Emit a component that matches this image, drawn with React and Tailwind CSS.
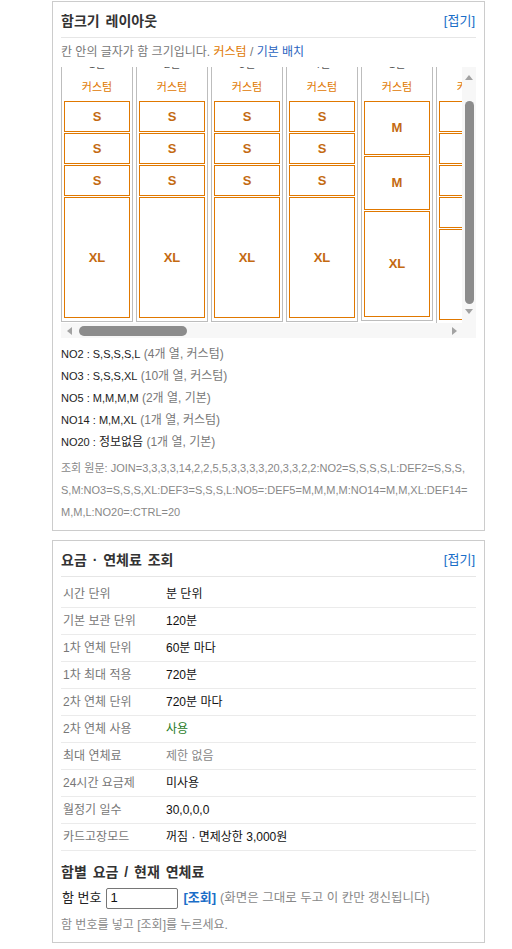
import React from "react";

const S = (label, h) => ({ label, h });

const columns = [
  { top: "1열", cells: [S("S", 31), S("S", 31), S("S", 31), S("XL", 121)] },
  { top: "2열", cells: [S("S", 31), S("S", 31), S("S", 31), S("XL", 121)] },
  { top: "3열", cells: [S("S", 31), S("S", 31), S("S", 31), S("XL", 121)] },
  { top: "4열", cells: [S("S", 31), S("S", 31), S("S", 31), S("XL", 121)] },
  { top: "1열", cells: [S("M", 54), S("M", 54), S("XL", 106)] },
  { top: "1열", cells: [S("S", 31), S("S", 31), S("S", 31), S("S", 31), S("L", 91)] },
  { top: "2열", cells: [S("S", 31), S("S", 31), S("S", 31), S("S", 31), S("L", 91)] },
];

const infoLines = [
  ["NO2 : S,S,S,S,L", "", "(4개 열, 커스텀)"],
  ["NO3 : S,S,S,XL", "", "(10개 열, 커스텀)"],
  ["NO5 : M,M,M,M", "", "(2개 열, 기본)"],
  ["NO14 : M,M,XL", "", "(1개 열, 커스텀)"],
  ["NO20 : ", "정보없음", "(1개 열, 기본)"],
];

const rows = [
  ["시간 단위", "분 단위", "text-[#111]"],
  ["기본 보관 단위", "120분", "text-[#111]"],
  ["1차 연체 단위", "60분 마다", "text-[#111]"],
  ["1차 최대 적용", "720분", "text-[#111]"],
  ["2차 연체 단위", "720분 마다", "text-[#111]"],
  ["2차 연체 사용", "사용", "text-[#1e7b1e]"],
  ["최대 연체료", "제한 없음", "text-[#888]"],
  ["24시간 요금제", "미사용", "text-[#111]"],
  ["월정기 일수", "30,0,0,0", "text-[#111]"],
  ["카드고장모드", "꺼짐 · 면제상한 3,000원", "text-[#111]"],
];

function Tri({ dir }) {
  const pts = {
    up: "0,5 4,0 8,5",
    down: "0,0 8,0 4,5",
    left: "5,0 5,8 0,4",
    right: "0,0 0,8 5,4",
  }[dir];
  const w = dir === "up" || dir === "down" ? 8 : 5;
  const h = dir === "up" || dir === "down" ? 5 : 8;
  return (
    <svg width={w} height={h} viewBox={`0 0 ${w} ${h}`}>
      <polygon points={pts} fill="#a3a3a3" />
    </svg>
  );
}

function Header({ title }) {
  return (
    <div className="box-content flex h-[22px] items-center justify-between border-b border-[#e6e6e6] pb-[5px]">
      <div className="text-[14px] font-bold text-[#333] [word-spacing:2px]">{title}</div>
      <div className="pr-[1px] text-[13px] text-[#1a6ec8]">[접기]</div>
    </div>
  );
}

export default function App() {
  return (
    <div className="bg-white pt-[1px] font-['Liberation_Sans','Noto_Sans_CJK_KR',sans-serif] text-[12px]">
      <div className="ml-[52px] w-[433px] border border-[#cccccc] px-[8px] pt-[8px] pb-[7px]">
        <Header title="함크기 레이아웃" />
        <div className="mt-[5px] h-[18px] leading-[18px] text-[#777]">
          칸 안의 글자가 함 크기입니다. <span className="text-[#e07800]">커스텀</span> /{" "}
          <span className="text-[#2a64c0]">기본 배치</span>
        </div>
        <div className="mt-[6px] flex h-[271px]">
          <div className="flex min-w-0 flex-1 flex-col">
            <div className="min-h-0 flex-1 overflow-hidden">
              <div className="-mt-[13px] flex w-max items-start gap-[3px]">
                {columns.map((c, i) => (
                  <div key={i} className="w-[72px] border border-[#bdbdbd] px-[2px] pt-[2px] pb-[3px]">
                    <div className="h-[14px] text-center text-[11px] leading-[14px] text-[#555]">{c.top}</div>
                    <div className="mt-[7px] h-[18px] text-center text-[11px] leading-[18px] text-[#e07800]">커스텀</div>
                    <div className="mt-[5px] flex flex-col gap-[1px]">
                      {c.cells.map((cell, j) => (
                        <div
                          key={j}
                          className="flex items-center justify-center border border-[#e07800] text-[13px] font-bold text-[#c46a12]"
                          style={{ height: cell.h }}
                        >
                          {cell.label}
                        </div>
                      ))}
                    </div>
                  </div>
                ))}
              </div>
            </div>
            <div className="flex h-[15px] items-center bg-[#f7f7f7]">
              <div className="flex w-[16px] justify-center"><Tri dir="left" /></div>
              <div className="ml-[2px] h-[10px] w-[108px] rounded-full bg-[#8c8c8c]" />
              <div className="flex-1" />
              <div className="flex w-[16px] justify-center"><Tri dir="right" /></div>
            </div>
          </div>
          <div className="flex w-[14px] flex-col bg-[#f7f7f7]">
            <div className="flex h-[16px] items-center justify-center pt-[4px]"><Tri dir="up" /></div>
            <div className="flex flex-1 flex-col items-center pt-[18px] pb-[5px]">
              <div className="w-[9px] flex-1 rounded-full bg-[#8c8c8c]" />
            </div>
            <div className="flex h-[14px] items-start justify-center"><Tri dir="down" /></div>
            <div className="h-[15px]" />
          </div>
        </div>
        <div className="mt-[5px] leading-[22px]">
          {infoLines.map(([a, k, b], i) => (
            <div key={i} className="h-[22px]">
              <span className="text-[11px] text-[#222]">{a}</span>
              {k ? <span className="text-[12px] text-[#222]">{k}</span> : null}{" "}
              <span className="text-[12px] text-[#777]">{b}</span>
            </div>
          ))}
        </div>
        <div className="mt-[4px] break-all pr-[7px] text-[11px] leading-[22px] text-[#888]">
          조회 원문: JOIN=3,3,3,3,14,2,2,5,5,3,3,3,3,20,3,3,2,2:NO2=S,S,S,S,L:DEF2=S,S,S,S,M:NO3=S,S,S,XL:DEF3=S,S,S,L:NO5=:DEF5=M,M,M,M:NO14=M,M,XL:DEF14=M,M,L:NO20=:CTRL=20
        </div>
      </div>

      <div className="mt-[9px] ml-[52px] w-[433px] border border-[#cccccc] px-[8px] pt-[8px] pb-[8px]">
        <Header title="요금 · 연체료 조회" />
        <div className="mt-[4px]">
          {rows.map(([k, v, cls], i) => (
            <div key={i} className="flex h-[27px] items-center border-b border-[#ebebeb]">
              <div className="w-[105px] pl-[2px] text-[#777]">{k}</div>
              <div className={cls}>{v}</div>
            </div>
          ))}
        </div>
        <div className="mt-[10px] h-[22px] text-[14px] font-bold leading-[22px] text-[#333] [word-spacing:2px]">
          함별 요금 / 현재 연체료
        </div>
        <div className="mt-[4px] flex h-[22px] items-center">
          <span className="ml-[1px] text-[13px] text-[#222]">함 번호</span>
          <div className="ml-[4px] flex h-[21px] w-[72px] items-center rounded-[2px] border border-[#767676] px-[4px] text-[13px] text-[#111]">
            1
          </div>
          <span className="ml-[6px] text-[13px] font-bold text-[#1a6ec8]">[조회]</span>
          <span className="ml-[4px] text-[12.5px] text-[#888]">(화면은 그대로 두고 이 칸만 갱신됩니다)</span>
        </div>
        <div className="mt-[7px] h-[18px] leading-[18px] text-[#888]">함 번호를 넣고 [조회]를 누르세요.</div>
      </div>
    </div>
  );
}
